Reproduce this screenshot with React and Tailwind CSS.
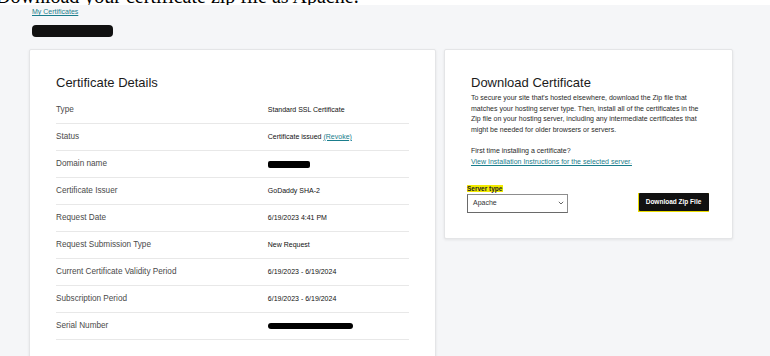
import React from "react";

const rows = [
  { label: "Type", value: "Standard SSL Certificate" },
  { label: "Status", value: "status" },
  { label: "Domain name", value: "redact-domain" },
  { label: "Certificate Issuer", value: "GoDaddy SHA-2" },
  { label: "Request Date", value: "6/19/2023 4:41 PM" },
  { label: "Request Submission Type", value: "New Request" },
  { label: "Current Certificate Validity Period", value: "6/19/2023 - 6/19/2024" },
  { label: "Subscription Period", value: "6/19/2023 - 6/19/2024" },
  { label: "Serial Number", value: "redact-serial" },
];

function Value({ v }) {
  if (v === "status")
    return (
      <span>
        Certificate issued{" "}
        <span className="text-[#1a7d8c] underline">(Revoke)</span>
      </span>
    );
  if (v === "redact-domain")
    return <span className="block w-[42px] h-[7px] bg-black rounded-[2px]" />;
  if (v === "redact-serial")
    return <span className="block w-[85px] h-[6px] bg-black rounded-[3px]" />;
  return <span>{v}</span>;
}

export default function App() {
  return (
    <div
      className="w-[770px] h-[356px] overflow-hidden bg-[#f5f6f8]"
      style={{ fontFamily: '"Liberation Sans", Arial, sans-serif' }}
    >
      <div className="h-[5px] overflow-hidden bg-white">
        <p
          className="text-[20px] leading-[20px] mt-[-14px] ml-[-4px] whitespace-nowrap text-black"
          style={{ fontFamily: '"Liberation Serif", "Times New Roman", serif' }}
        >
          Download your certificate zip file as Apache.
        </p>
      </div>

      <div className="pl-[32px] pt-[2px]">
        <a className="block text-[7px] leading-[9px] text-[#1a7d8c] underline">
          My Certificates
        </a>
        <div className="mt-[9px] w-[81px] h-[12px] bg-[#111] rounded-[4px]" />
      </div>

      <div className="flex gap-[8px] pl-[29px] mt-[12px] items-start">
        <div className="w-[407px] h-[330px] bg-white border border-[#e4e5e7] rounded-[2px] shadow-[0_1px_3px_rgba(0,0,0,0.08)] pl-[26px] pr-[26px] pt-[25px]">
          <h2 className="text-[13px] leading-[16px] text-[#1b1b1b]">Certificate Details</h2>
          <div className="mt-[6px]">
            {rows.map((r) => (
              <div
                key={r.label}
                className="grid grid-cols-[60%_40%] h-[27px] items-center border-b border-[#e8e8e8]"
              >
                <span className="text-[8.2px] text-[#4a4a4a]">{r.label}</span>
                <span className="text-[7px] text-[#111]">
                  <Value v={r.value} />
                </span>
              </div>
            ))}
          </div>
        </div>

        <div className="w-[289px] h-[190px] bg-white border border-[#e4e5e7] rounded-[2px] shadow-[0_1px_3px_rgba(0,0,0,0.08)] px-[26px] pt-[25px]">
          <h2 className="text-[13px] leading-[16px] text-[#1b1b1b]">Download Certificate</h2>
          <p className="mt-[2px] text-[7px] leading-[10.6px] text-[#2a2a2a] w-[236px]">
            To secure your site that's hosted elsewhere, download the Zip file that
            matches your hosting server type. Then, install all of the certificates in the
            Zip file on your hosting server, including any intermediate certificates that
            might be needed for older browsers or servers.
          </p>
          <p className="mt-[11px] text-[7px] leading-[10.6px] text-[#2a2a2a]">
            First time installing a certificate?
          </p>
          <a className="block text-[7px] leading-[10.6px] text-[#1a7d8c] underline">
            View Installation Instructions for the selected server.
          </a>
          <div className="mt-[17px] flex items-end justify-between mr-[-3px]">
            <div className="ml-[-4px]">
              <span className="block w-fit bg-[#f2ea00] text-[6.5px] leading-[7px] font-bold text-[#222] pr-[1px]">
                Server type
              </span>
              <div className="mt-[2px] w-[101px] h-[19px] border border-[#8d8d8d] border-l-[#6a6a6a] border-b-[#6a6a6a] bg-white flex items-center justify-between pl-[5px] pr-[3px]">
                <span className="text-[7px] text-[#333]">Apache</span>
                <svg width="6" height="4" viewBox="0 0 6 4">
                  <path d="M0.8 0.8 L3 3 L5.2 0.8" fill="none" stroke="#555" strokeWidth="0.9" />
                </svg>
              </div>
            </div>
            <div className="bg-[#e9dc00] p-[0.5px] mb-[1px]">
              <div className="w-[70px] h-[18px] bg-[#111] rounded-[1px] flex items-center justify-center">
                <span className="text-[6.5px] font-bold text-white">Download Zip File</span>
              </div>
            </div>
          </div>
        </div>
      </div>
    </div>
  );
}
